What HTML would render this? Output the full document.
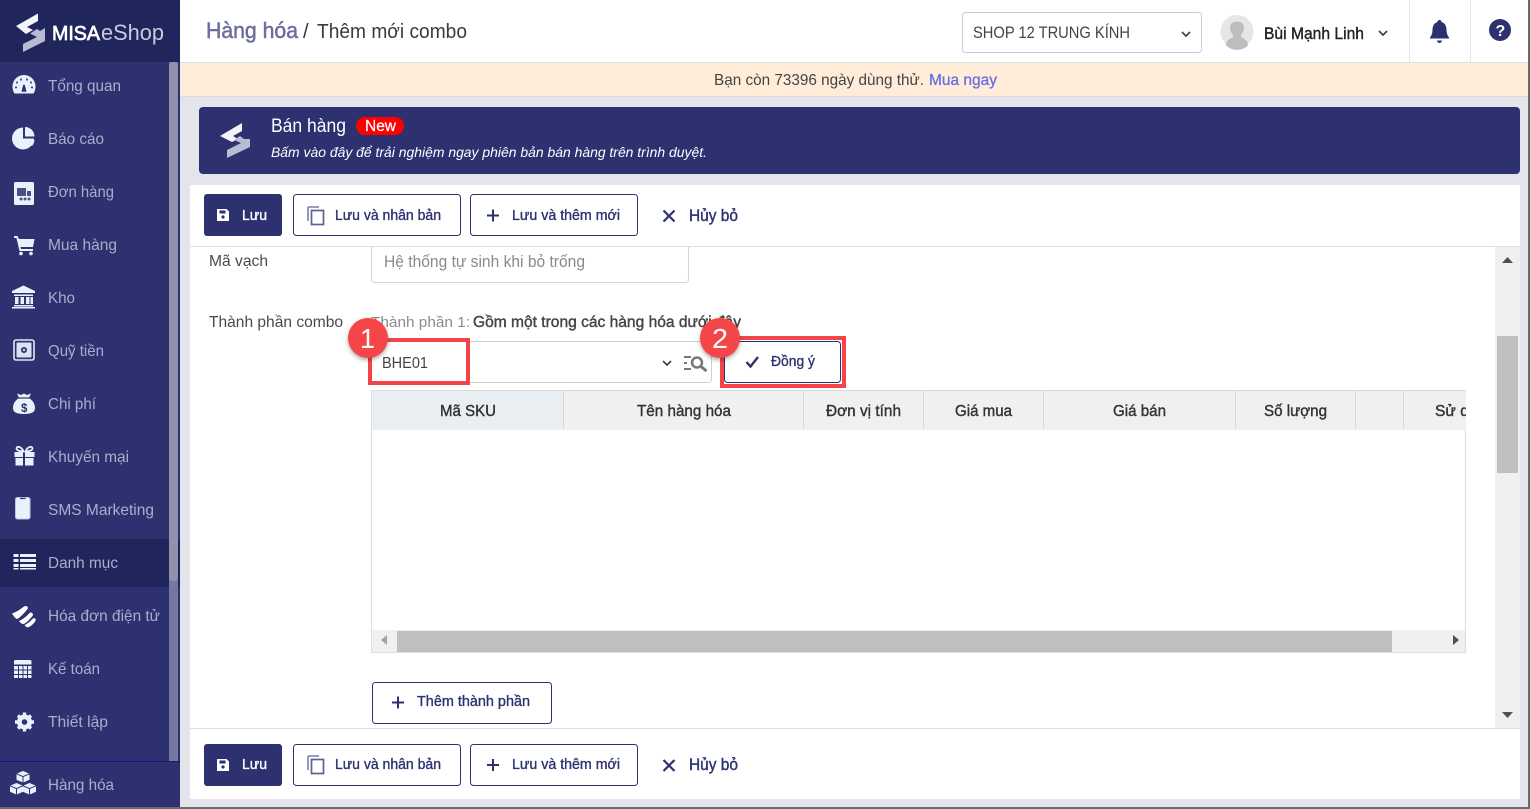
<!DOCTYPE html>
<html lang="vi">
<head>
<meta charset="utf-8">
<title>Thêm mới combo</title>
<style>
html,body{margin:0;padding:0;width:1530px;height:809px;overflow:hidden;background:#e4e5eb}
svg{display:block;position:absolute;left:0;top:0}
text{font-family:"Liberation Sans",sans-serif;white-space:pre}
.s{font-size:16px;fill:#abadcd}
.btn{font-size:14.500px;fill:#2d3170;stroke:#2d3170;stroke-width:.35px}
.th{font-size:16px;fill:#333;stroke:#333;stroke-width:.4px}
.f{font-size:16px;fill:#4a4a4a}
.ic{fill:#e6f3fc}
</style>
</head>
<body>
<svg width="1530" height="809" viewBox="0 0 1530 809" xmlns="http://www.w3.org/2000/svg">
<defs>
  <g id="floppy"><path d="M-6-6H3.500L6-3.500V6H-6Z" fill="#fff"/><rect x="-3.500" y="-4.500" width="6" height="3" fill="#2d3170"/><circle cx="0" cy="2" r="1.600" fill="#2d3170"/></g>
  <g id="copy"><path d="M-8-9H3M-8-9V5" fill="none" stroke="#7b7ea5" stroke-width="1.600"/><rect x="-4.500" y="-5.500" width="12" height="14" fill="none" stroke="#5d6092" stroke-width="1.700"/></g>
  <path id="plus" d="M-6 0H6M0-6V6" stroke="#2d3170" stroke-width="2" fill="none"/>
  <path id="cross" d="M-5.500-5.500L5.500 5.500M5.500-5.500L-5.500 5.500" stroke="#2d3170" stroke-width="2.200" fill="none"/>
  <path id="chev" d="M-4-2L0 2L4-2" stroke="#444" stroke-width="1.700" fill="none"/>
  <clipPath id="tbl"><rect x="371" y="385" width="1095" height="50"/></clipPath>
  <clipPath id="form"><rect x="190" y="247" width="1305" height="481"/></clipPath>
  <filter id="sh" x="-30%" y="-30%" width="160%" height="160%"><feDropShadow dx="0" dy="2" stdDeviation="2" flood-color="#000" flood-opacity=".35"/></filter>
</defs>

<!-- page -->
<rect width="1530" height="809" fill="#e4e5eb"/>

<!-- top bar -->
<rect x="180" y="0" width="1350" height="62" fill="#fff"/>
<rect x="180" y="62" width="1350" height="1" fill="#dedede"/>
<text x="206" y="38" font-size="22" fill="#6b6e9e" stroke="#6b6e9e" stroke-width=".5" textLength="92" lengthAdjust="spacingAndGlyphs">Hàng hóa</text>
<text x="303" y="38" font-size="20" fill="#333">/</text>
<text x="317" y="38" font-size="20" fill="#3a3a3a" textLength="150" lengthAdjust="spacingAndGlyphs">Thêm mới combo</text>
<rect x="962.500" y="12.500" width="239" height="40" rx="3" fill="#fff" stroke="#ccc"/>
<text x="973" y="38" font-size="17" fill="#444" textLength="157" lengthAdjust="spacingAndGlyphs">SHOP 12 TRUNG KÍNH</text>
<use href="#chev" x="1186" y="34"/>
<circle cx="1237" cy="31.500" r="16.500" fill="#e6e6e6"/>
<path d="M1226 45.500c0-6 5-7 7-8.500v-2.500c-2-1.500-3-4-3-6.500 0-4 3-6.500 7-6.500s7 2.500 7 6.500c0 2.500-1 5-3 6.500v2.500c2 1.500 7 2.500 7 8.500a16 16 0 0 1-22 0z" fill="#bdbdbd"/>
<text x="1264" y="39" font-size="16.500" fill="#222" stroke="#222" stroke-width=".4" textLength="100" lengthAdjust="spacingAndGlyphs">Bùi Mạnh Linh</text>
<use href="#chev" x="1383" y="33"/>
<rect x="1409" y="0" width="1" height="62" fill="#e8e8e8"/>
<rect x="1470" y="0" width="1" height="62" fill="#e8e8e8"/>
<path d="M1439.500 20a2 2 0 0 1 2 2c3.500 1 5 4 5 8 0 3 .8 5 2.500 7.500v1h-19v-1c1.700-2.500 2.500-4.500 2.500-7.500 0-4 1.500-7 5-8a2 2 0 0 1 2-2z" fill="#2d3170"/>
<path d="M1437 40.500h5a2.500 2.500 0 0 1-5 0z" fill="#2d3170"/>
<circle cx="1500" cy="30" r="11" fill="#2d3170"/>
<text x="1495.500" y="36" font-size="16" font-weight="700" fill="#fff">?</text>

<!-- trial notice -->
<rect x="180" y="63" width="1350" height="33" fill="#ffecd9"/>
<rect x="180" y="96" width="1350" height="1" fill="#dcdcdc"/>
<text x="714" y="85" font-size="16" fill="#444" textLength="210" lengthAdjust="spacingAndGlyphs">Bạn còn 73396 ngày dùng thử.</text>
<text x="929" y="85" font-size="16" fill="#6a6ee0" stroke="#6a6ee0" stroke-width=".3" textLength="68" lengthAdjust="spacingAndGlyphs">Mua ngay</text>

<!-- sales banner -->
<rect x="199" y="107" width="1321" height="67" rx="4" fill="#2d3170"/>
<path d="M220 136L242 123V131L233 136L238 139L232 142Z" fill="#f3f3f8"/>
<path d="M227 158V150L241 143L234 140L240 136L244 139L250 139V147Z" fill="#b9bad3"/>
<text x="271" y="132" font-size="19" fill="#fff" textLength="75" lengthAdjust="spacingAndGlyphs">Bán hàng</text>
<rect x="356" y="117" width="48" height="18" rx="9" fill="#f00"/>
<text x="365" y="131" font-size="15.500" fill="#fff" stroke="#fff" stroke-width=".25" textLength="31" lengthAdjust="spacingAndGlyphs">New</text>
<text x="271" y="157" font-size="14" font-style="italic" fill="#fff" textLength="436" lengthAdjust="spacingAndGlyphs">Bấm vào đây để trải nghiệm ngay phiên bản bán hàng trên trình duyệt.</text>

<!-- card -->
<rect x="190" y="185" width="1330" height="614" fill="#fff"/>
<rect x="190" y="246" width="1330" height="1" fill="#e0e0e0"/>
<rect x="190" y="728" width="1330" height="1" fill="#e0e0e0"/>

<!-- top toolbar -->
<rect x="204" y="194" width="78" height="42" rx="3" fill="#2d3170"/>
<use href="#floppy" x="223" y="215"/>
<text x="242" y="220" font-size="14.500" fill="#fff" stroke="#fff" stroke-width=".35" textLength="25" lengthAdjust="spacingAndGlyphs">Lưu</text>
<rect x="293.500" y="194.500" width="167" height="41" rx="3" fill="#fff" stroke="#2d3170"/>
<use href="#copy" x="316" y="216"/>
<text x="335" y="220" class="btn" textLength="106" lengthAdjust="spacingAndGlyphs">Lưu và nhân bản</text>
<rect x="470.500" y="194.500" width="167" height="41" rx="3" fill="#fff" stroke="#2d3170"/>
<use href="#plus" x="493" y="215.500"/>
<text x="512" y="220" class="btn" textLength="108" lengthAdjust="spacingAndGlyphs">Lưu và thêm mới</text>
<use href="#cross" x="669" y="216"/>
<text x="689" y="221" font-size="16.500" fill="#2d3170" stroke="#2d3170" stroke-width=".4" textLength="49" lengthAdjust="spacingAndGlyphs">Hủy bỏ</text>

<!-- form -->
<g clip-path="url(#form)">
  <rect x="371.500" y="240.500" width="317" height="42" rx="3" fill="#fff" stroke="#d4d4d4"/>
</g>
<text x="209" y="266" class="f" textLength="59" lengthAdjust="spacingAndGlyphs">Mã vạch</text>
<text x="384" y="267" font-size="16.500" fill="#8a8a8a" textLength="201" lengthAdjust="spacingAndGlyphs">Hệ thống tự sinh khi bỏ trống</text>
<text x="209" y="327" class="f" textLength="134" lengthAdjust="spacingAndGlyphs">Thành phần combo</text>
<text x="371" y="327" font-size="15" fill="#8c8c8c" textLength="99" lengthAdjust="spacingAndGlyphs">Thành phần 1:</text>
<text x="473" y="327" font-size="15.500" fill="#444" stroke="#444" stroke-width=".4" textLength="268" lengthAdjust="spacingAndGlyphs">Gồm một trong các hàng hóa dưới đây</text>

<rect x="371.500" y="341.500" width="340" height="41" rx="3" fill="#fff" stroke="#d0d0d0"/>
<text x="382" y="368" font-size="16" fill="#444" textLength="46" lengthAdjust="spacingAndGlyphs">BHE01</text>
<use href="#chev" x="667" y="363"/>
<path d="M684 357h7M684 363h3M684 369h7" stroke="#777" stroke-width="2" fill="none"/>
<circle cx="697" cy="362.500" r="5" fill="none" stroke="#777" stroke-width="2.500"/>
<path d="M701 366.500l5.500 4.500" stroke="#777" stroke-width="3"/>

<rect x="724.500" y="341.500" width="116" height="41" rx="3" fill="#fff" stroke="#2d3170"/>
<path d="M746.500 362l4 4.500l7.500-9.500" stroke="#2d3170" stroke-width="2.400" fill="none"/>
<text x="771" y="366" class="btn" textLength="44" lengthAdjust="spacingAndGlyphs">Đồng ý</text>

<!-- table -->
<rect x="371" y="390" width="1095" height="40" fill="#f0f0f0"/>
<rect x="372" y="391" width="191" height="39" fill="#e9eef2"/>
<rect x="371" y="390" width="1095" height="1" fill="#d8d8d8"/>
<rect x="371" y="390" width="1" height="262" fill="#ddd"/>
<rect x="1465" y="430" width="1" height="222" fill="#ddd"/>
<g fill="#d8d8d8">
  <rect x="563" y="391" width="1" height="38"/><rect x="803" y="391" width="1" height="38"/>
  <rect x="923" y="391" width="1" height="38"/><rect x="1043" y="391" width="1" height="38"/>
  <rect x="1235" y="391" width="1" height="38"/><rect x="1355" y="391" width="1" height="38"/>
  <rect x="1403" y="391" width="1" height="38"/>
</g>
<text x="440" y="416" class="th" textLength="56" lengthAdjust="spacingAndGlyphs">Mã SKU</text>
<text x="637" y="416" class="th" textLength="94" lengthAdjust="spacingAndGlyphs">Tên hàng hóa</text>
<text x="826" y="416" class="th" textLength="75" lengthAdjust="spacingAndGlyphs">Đơn vị tính</text>
<text x="955" y="416" class="th" textLength="57" lengthAdjust="spacingAndGlyphs">Giá mua</text>
<text x="1113" y="416" class="th" textLength="53" lengthAdjust="spacingAndGlyphs">Giá bán</text>
<text x="1264" y="416" class="th" textLength="63" lengthAdjust="spacingAndGlyphs">Số lượng</text>
<g clip-path="url(#tbl)"><text x="1435" y="416" class="th" textLength="60" lengthAdjust="spacingAndGlyphs">Sử dụng</text></g>

<!-- horizontal scrollbar -->
<rect x="372" y="630" width="1093" height="22" fill="#f0f0f0"/>
<rect x="397" y="631" width="995" height="21" fill="#bfbfbf"/>
<rect x="371" y="652" width="1095" height="1" fill="#ddd"/>
<path d="M387 635v10l-6-5z" fill="#a3a3a3"/>
<path d="M1453 635v10l6-5z" fill="#505050"/>

<!-- add component -->
<rect x="372.500" y="682.500" width="179" height="41" rx="3" fill="#fff" stroke="#2d3170"/>
<use href="#plus" x="398" y="702.500"/>
<text x="417" y="706" class="btn" textLength="113" lengthAdjust="spacingAndGlyphs">Thêm thành phần</text>

<!-- vertical scrollbar -->
<rect x="1495" y="247" width="25" height="481" fill="#f0f0f0"/>
<rect x="1497" y="336" width="21" height="137" fill="#bfbfbf"/>
<path d="M1502 263h11l-5.500-6z" fill="#505050"/>
<path d="M1502 712h11l-5.500 6z" fill="#505050"/>

<!-- bottom toolbar -->
<rect x="204" y="744" width="78" height="42" rx="3" fill="#2d3170"/>
<use href="#floppy" x="223" y="765"/>
<text x="242" y="769" font-size="14.500" fill="#fff" stroke="#fff" stroke-width=".35" textLength="25" lengthAdjust="spacingAndGlyphs">Lưu</text>
<rect x="293.500" y="744.500" width="167" height="41" rx="3" fill="#fff" stroke="#2d3170"/>
<use href="#copy" x="316" y="765"/>
<text x="335" y="769" class="btn" textLength="106" lengthAdjust="spacingAndGlyphs">Lưu và nhân bản</text>
<rect x="470.500" y="744.500" width="167" height="41" rx="3" fill="#fff" stroke="#2d3170"/>
<use href="#plus" x="493" y="765"/>
<text x="512" y="769" class="btn" textLength="108" lengthAdjust="spacingAndGlyphs">Lưu và thêm mới</text>
<use href="#cross" x="669" y="765.500"/>
<text x="689" y="770" font-size="16.500" fill="#2d3170" stroke="#2d3170" stroke-width=".4" textLength="49" lengthAdjust="spacingAndGlyphs">Hủy bỏ</text>

<!-- annotations -->
<g fill="none" stroke="#f44448" stroke-width="4">
  <rect x="370" y="340" width="98" height="43"/>
  <rect x="722" y="338" width="122" height="48"/>
</g>
<circle cx="368" cy="338" r="20" fill="#f44448" filter="url(#sh)"/>
<text x="360" y="348" font-size="28" fill="#fff" textLength="15" lengthAdjust="spacingAndGlyphs">1</text>
<circle cx="720" cy="338" r="20" fill="#f44448" filter="url(#sh)"/>
<text x="712" y="348" font-size="28" fill="#fff" textLength="16" lengthAdjust="spacingAndGlyphs">2</text>

<!-- sidebar -->
<rect x="0" y="0" width="180" height="809" fill="#2d3170"/>
<rect x="0" y="0" width="180" height="62" fill="#20255c"/>
<path d="M16 26L38 13.500V21L27 27L33 30L26 34Z" fill="#f3f3f8"/>
<path d="M23 52V44L37 37L30 33.500L37 29L40 31L45 28V41Z" fill="#b9bad3"/>
<text x="52" y="40" font-size="20" fill="#fff" stroke="#fff" stroke-width=".7" textLength="48" lengthAdjust="spacingAndGlyphs">MISA</text>
<text x="101" y="40" font-size="22" fill="#c9cade" textLength="63" lengthAdjust="spacingAndGlyphs">eShop</text>

<rect x="0" y="539" width="180" height="48" fill="#20255c"/>
<rect x="0" y="761" width="180" height="1" fill="#1d1080"/>
<rect x="169" y="62" width="9" height="699" fill="#75779f"/>
<rect x="169" y="62" width="9" height="519" rx="4" fill="#9092ad"/>

<text class="s" x="48" y="91" textLength="73" lengthAdjust="spacingAndGlyphs">Tổng quan</text>
<text class="s" x="48" y="144" textLength="56" lengthAdjust="spacingAndGlyphs">Báo cáo</text>
<text class="s" x="48" y="197" textLength="66" lengthAdjust="spacingAndGlyphs">Đơn hàng</text>
<text class="s" x="48" y="250" textLength="69" lengthAdjust="spacingAndGlyphs">Mua hàng</text>
<text class="s" x="48" y="303" textLength="27" lengthAdjust="spacingAndGlyphs">Kho</text>
<text class="s" x="48" y="356" textLength="56" lengthAdjust="spacingAndGlyphs">Quỹ tiền</text>
<text class="s" x="48" y="409" textLength="48" lengthAdjust="spacingAndGlyphs">Chi phí</text>
<text class="s" x="48" y="462" textLength="81" lengthAdjust="spacingAndGlyphs">Khuyến mại</text>
<text class="s" x="48" y="515" textLength="106" lengthAdjust="spacingAndGlyphs">SMS Marketing</text>
<text class="s" x="48" y="568" textLength="70" lengthAdjust="spacingAndGlyphs">Danh mục</text>
<text class="s" x="48" y="621" textLength="112" lengthAdjust="spacingAndGlyphs">Hóa đơn điện tử</text>
<text class="s" x="48" y="674" textLength="52" lengthAdjust="spacingAndGlyphs">Kế toán</text>
<text class="s" x="48" y="727" textLength="60" lengthAdjust="spacingAndGlyphs">Thiết lập</text>
<text class="s" x="48" y="790" textLength="66" lengthAdjust="spacingAndGlyphs">Hàng hóa</text>

<!-- sidebar icons -->
<path class="ic" d="M24 75a11.500 11.500 0 0 1 11.500 11.500c0 3-.8 5-2 7H14.500c-1.200-2-2-4-2-7A11.500 11.500 0 0 1 24 75z"/>
<path d="M24 85l1.500 6h-3zM17 81.500v2M31 81.500v2M21 78.500v2M27 78.500v2M15 87.500h2M31 87.500h2" stroke="#2d3170" stroke-width="1.600" fill="#2d3170"/>
<path class="ic" d="M23 127.500v11h11a11 11 0 1 1-11-11z"/>
<path class="ic" d="M25 127a9.500 9.500 0 0 1 9.500 9.500H25z"/>
<path class="ic" d="M26 140h8.500a10 10 0 0 1-2.500 6z"/>
<rect class="ic" x="14" y="182" width="20" height="23" rx="1.500"/>
<path d="M17 188h9v8h-9zM27 191h4v5h-4z" fill="#4c5083"/>
<circle cx="21" cy="199" r="1.500" fill="#4c5083"/><circle cx="25" cy="199" r="1.500" fill="#4c5083"/><circle cx="29" cy="199" r="1.500" fill="#4c5083"/>
<path class="ic" d="M14 236h3.500l1.500 3h15.500l-1.500 8H20.500l.5 2h12v2H19.500L16.500 238H14z"/>
<circle class="ic" cx="21" cy="253.500" r="1.800"/><circle class="ic" cx="31" cy="253.500" r="1.800"/>
<path class="ic" d="M23.500 285.500L35 291v2H12v-2zM14 294.500h19v1.500H14zM15 297h3.500v7H15zM20.500 297H24v7h-3.500zM26 297h3.500v7H26zM30.500 297H33v7h-2.500zM14 305h19v1.500H14zM12 307h23v1.500H12z"/>
<rect x="14" y="340" width="20" height="20" rx="2" fill="#2d3170" stroke="#dfeaf5" stroke-width="1.600"/>
<rect x="16.500" y="342.500" width="15" height="15" rx="1" fill="#d8e3f2"/>
<circle cx="24" cy="350" r="3" fill="#2d3170"/><circle cx="24" cy="350" r="1.200" fill="#d8e3f2"/>
<path class="ic" d="M13 408c0-5 3-8 6-10l-2-4.500 4 1.500 3-1.500 3 1.500 4-1.500-2 4.500c3 2 6 5 6 10 0 4-3 6-11 6s-11-2-11-6z"/>
<path d="M18.500 398h11" stroke="#2d3170" stroke-width="1.200"/>
<text x="21" y="412" font-size="11.500" font-weight="700" fill="#2d3170">$</text>
<path class="ic" d="M14.500 452h8.500v5h-8.500zM25 452h9.500v5H25zM15.500 458h7.500v7.500h-7.500zM25 458h8.500v7.500H25z"/>
<path d="M23.500 451.500c-2-5-7-6-7-3 0 2 4 3 7 3zM25.500 451.500c2-5 7-6 7-3 0 2-4 3-7 3z" fill="none" stroke="#e6f3fc" stroke-width="1.800"/>
<rect x="15.500" y="497.500" width="14.500" height="21.500" rx="2" fill="#e6f3fc" stroke="#b9c6dd"/>
<path d="M20 498.500h5.500" stroke="#2d3170" stroke-width="1.200"/>
<path class="ic" d="M13.500 554h5v3h-5zM20 554h16v3H20zM13.500 559h5v3h-5zM20 559h16v3H20zM13.500 564h5v3h-5zM20 564h16v3H20zM13.500 568h5v1.500h-5zM20 568h16v1.500H20z"/>
<g fill="#fff">
  <path d="M12 613.500c3-1 7-3 12-7 2-1.500 5 .5 3.500 2.500-3 4-7 8-10 10-1.500 .5-4-3-5.500-5.500z"/>
  <path d="M19 621c3-1 8-5 10.500-8 2-1.500 4.500 1 3 3-3 3.500-6 7-9 8-1.500 .3-3.500-1.500-4.500-3z"/>
  <path d="M24.500 625c3-1 6-4 8.500-6.500 1.800-1.200 3.500 1 2.300 2.800-2.300 3-4.300 5-7.300 6-1.500 .3-2.500-1-3.500-2.300z"/>
</g>
<path class="ic" d="M14 661.500a1.500 1.500 0 0 1 1.500-1.500h14.500a1.500 1.500 0 0 1 1.500 1.500v3H14z"/>
<path class="ic" d="M14 666h4v3.500h-4zM19 666h3.500v3.500H19zM23.500 666H27v3.500h-3.500zM28 666h3.500v3.500H28zM14 670.500h4V674h-4zM19 670.500h3.500V674H19zM23.500 670.500H27V674h-3.500zM28 670.500h3.500V674H28zM14 675h4v3h-4zM19 675h3.500v3H19zM23.500 675H27v3h-3.500zM28 675h3.500v3H28z"/>
<circle class="ic" cx="24.500" cy="722" r="7.500"/>
<path d="M24.500 712.500v19M15 722h19M18 715.500l13 13M31 715.500l-13 13" stroke="#e6f3fc" stroke-width="3.400"/>
<circle cx="24.500" cy="722" r="2.800" fill="#2d3170"/>
<path class="ic" d="M23 771l6.500 2.800v6L23 782.600l-6.500-2.800v-6zM16.500 783l6.500 2.800v6L16.500 794.600 10 791.800v-6zM29.500 783l6.500 2.800v6l-6.500 2.800-6.500-2.800v-6z"/>
<path d="M16.500 773.800l6.500 2.800 6.500-2.800M10 785.800l6.500 2.800 6.500-2.800M23 785.800l6.500 2.800 6.500-2.800M23 776.600v6M16.500 788.600v6M29.500 788.600v6" stroke="#2d3170" stroke-width="1" fill="none"/>

<!-- window edges -->
<rect x="1528" y="0" width="2" height="809" fill="#6a6a6a"/>
<rect x="0" y="807" width="1530" height="2" fill="#6a6a6a"/>
</svg>
</body>
</html>
